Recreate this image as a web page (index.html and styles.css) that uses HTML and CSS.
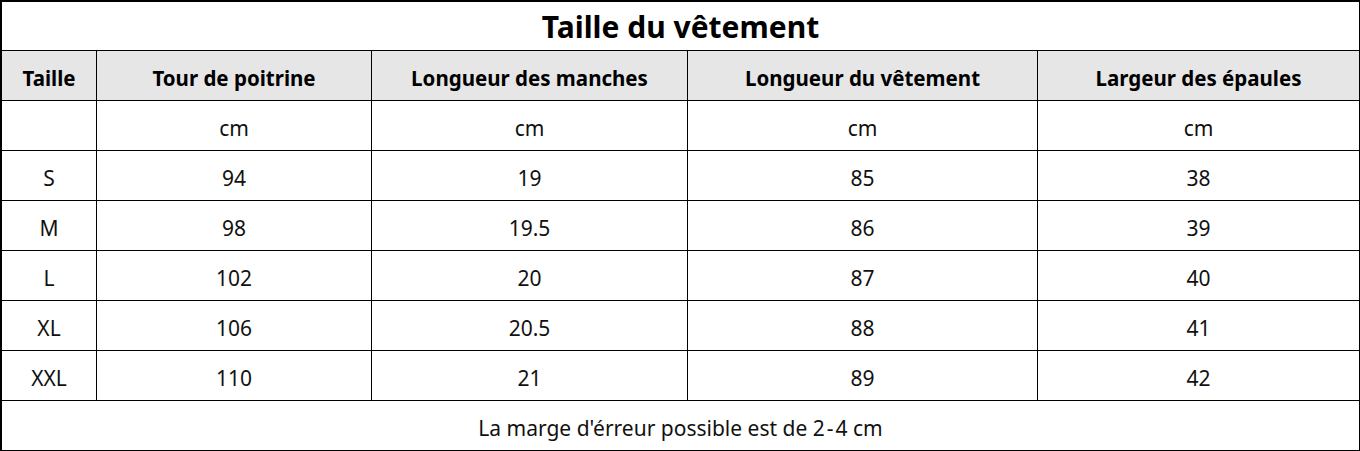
FILE: index.html
```html
<!DOCTYPE html>
<html lang="fr">
<head>
<meta charset="utf-8">
<link rel="stylesheet" href="styles.css">
</head>
<body>
<div class="size-table">
  <div class="cell title">Taille du vêtement</div>

  <div class="cell head">Taille</div>
  <div class="cell head">Tour de poitrine</div>
  <div class="cell head">Longueur des manches</div>
  <div class="cell head">Longueur du vêtement</div>
  <div class="cell head">Largeur des épaules</div>

  <div class="cell"></div><div class="cell">cm</div><div class="cell">cm</div><div class="cell">cm</div><div class="cell">cm</div>
  <div class="cell">S</div><div class="cell">94</div><div class="cell">19</div><div class="cell">85</div><div class="cell">38</div>
  <div class="cell">M</div><div class="cell">98</div><div class="cell">19.5</div><div class="cell">86</div><div class="cell">39</div>
  <div class="cell">L</div><div class="cell">102</div><div class="cell">20</div><div class="cell">87</div><div class="cell">40</div>
  <div class="cell">XL</div><div class="cell">106</div><div class="cell">20.5</div><div class="cell">88</div><div class="cell">41</div>
  <div class="cell">XXL</div><div class="cell">110</div><div class="cell">21</div><div class="cell">89</div><div class="cell">42</div>

  <div class="cell note">La marge d'érreur possible est de 2<span class="dash">-</span>4 cm</div>
</div>
</body>
</html>
```
FILE: styles.css
```css
html, body {
  margin: 0;
  padding: 0;
  background: #fff;
}
.size-table {
  display: grid;
  grid-template-columns: 95px 275px 316px 350px 322px;
  grid-template-rows: 49px;
  grid-auto-rows: 50px;
  width: 1360px;
  box-sizing: border-box;
  border-top: 2px solid #000;
  border-left: 2px solid #000;
  font-family: "Noto Sans", "Noto Sans CJK SC", sans-serif;
  color: #111;
}
.cell {
  display: flex;
  align-items: center;
  justify-content: center;
  box-sizing: border-box;
  border-right: 1px solid #000;
  border-bottom: 1px solid #000;
  font-size: 21px;
  line-height: 24px;
  padding-top: 5px;
  white-space: nowrap;
}
.title {
  grid-column: 1 / -1;
  font-size: 30px;
  font-weight: 700;
  color: #000;
  padding-top: 2px;
}
.head {
  background: #e6e6e6;
  font-weight: 700;
  font-size: 20.5px;
  color: #000;
}
.note {
  grid-column: 1 / -1;
}
.dash { margin: 0 2px; }
```
